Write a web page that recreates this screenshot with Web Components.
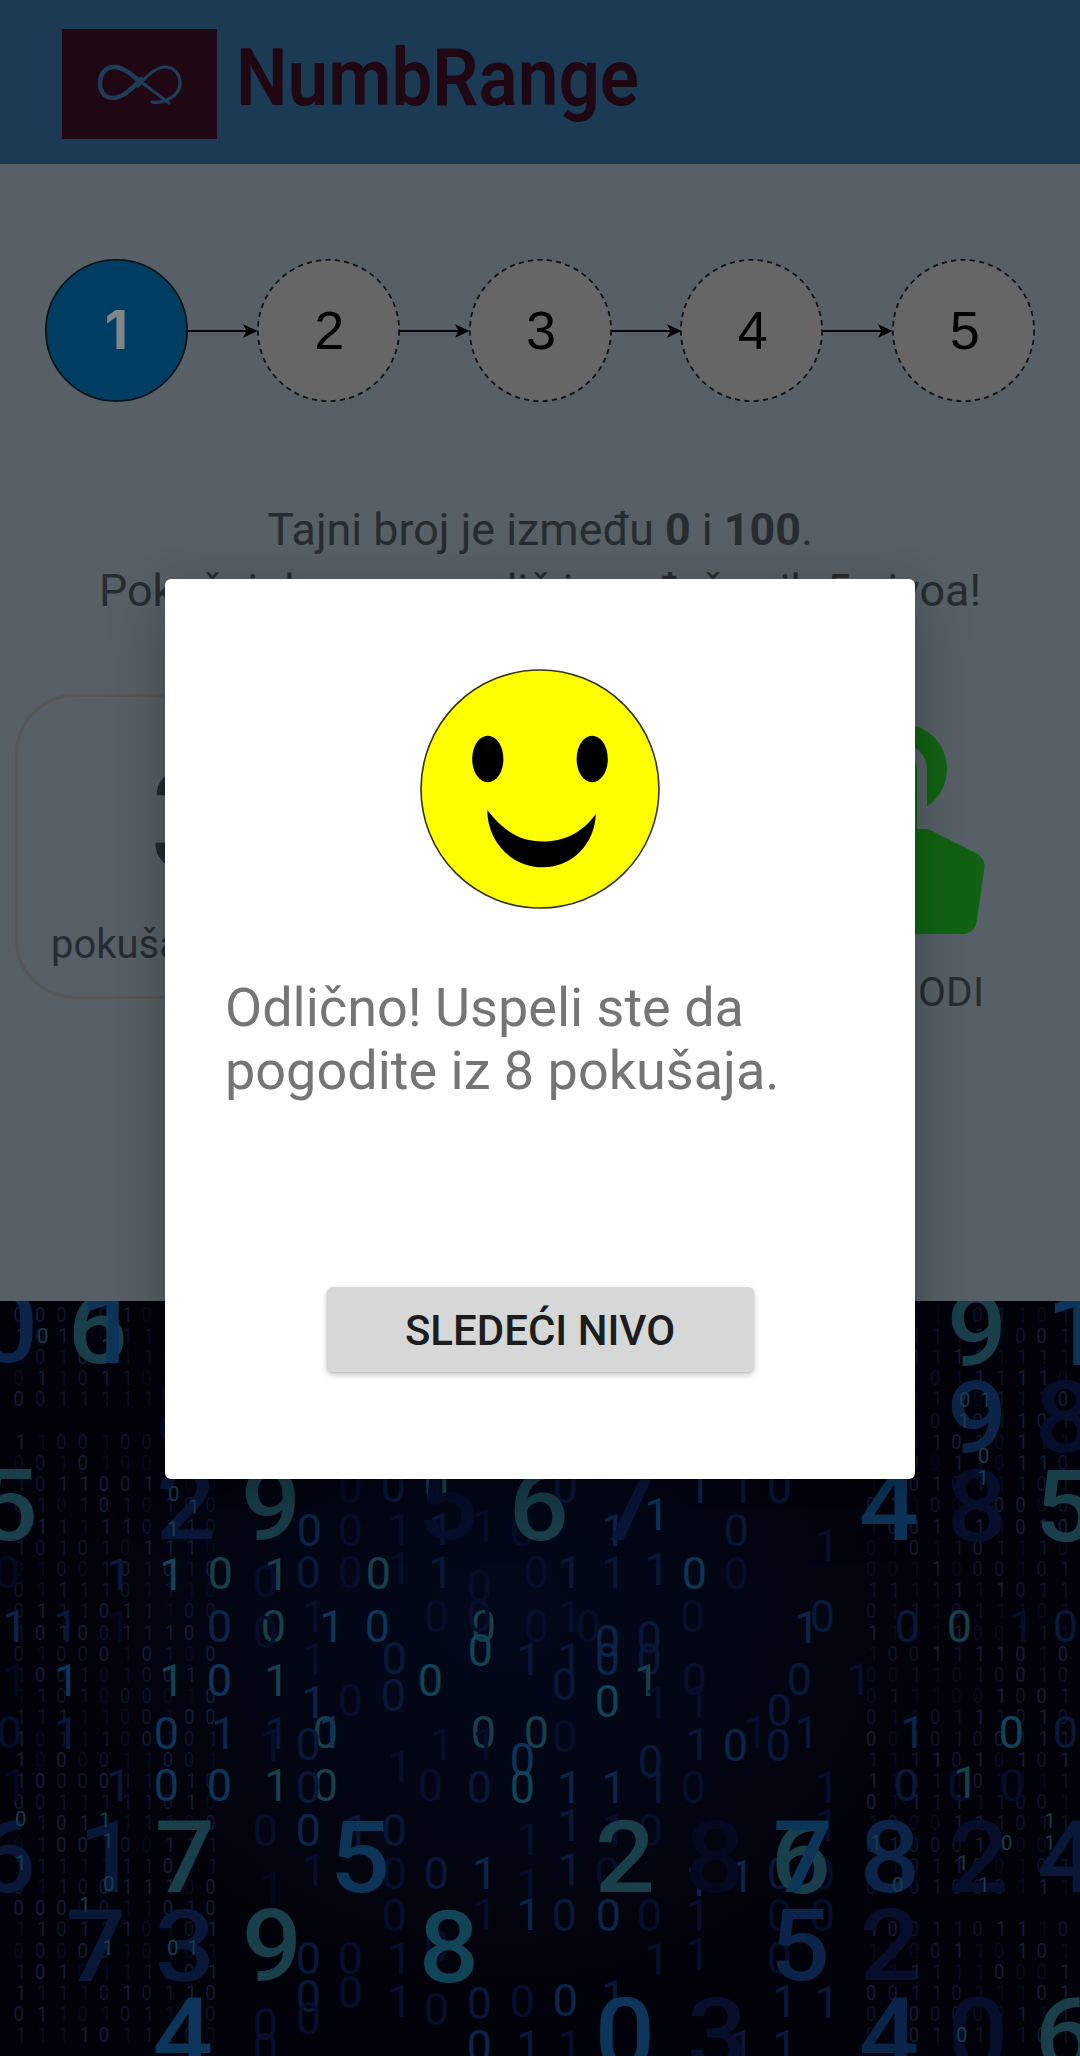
<!DOCTYPE html>
<html lang="sr-Latn">
<head>
<meta charset="utf-8">
<title>NumbRange</title>
<style>
html,body{margin:0;padding:0;background:#02030b}
body{font-family:Roboto,"Liberation Sans",sans-serif}
</style>
</head>
<body>
<numb-app></numb-app>
<script>
const define=(name,html,init)=>customElements.define(name,class extends HTMLElement{
  connectedCallback(){
    if(this.shadowRoot)return;
    const t=document.createElement('template');
    t.innerHTML=typeof html==='function'?html(this):html;
    this.attachShadow({mode:'open'}).append(t.content.cloneNode(true));
    if(init)init(this.shadowRoot,this);
  }
});

define('app-header',`<style>
:host{display:flex;height:164px;box-sizing:border-box;background:#1b3b55;padding:29px 0 0 62px}
.mark{width:155px;height:110px;background:#1f0813;flex:none}
.name{flex:none;margin-left:19px;overflow:visible}
svg{display:block}
</style>
<div class="mark"><svg width="155" height="110" viewBox="0 0 155 110" fill="none" stroke="#1d3d58" stroke-linecap="round">
<path stroke-width="4.5" d="M79 54C69 44 60 38 52 38C43 38 38 46 38 54C38 63 43 69 51 69C61 69 71 59 79 50"/>
<path stroke-width="3.2" d="M76 57C87 44 95 38 103 38C112 38 118 45 118 54C118 64 110 70 98 73C94 74 91 73 90 73M78 52L107 74"/></svg></div>
<svg class="name" width="410" height="110"><text x="0" y="75.5" textLength="403" lengthAdjust="spacingAndGlyphs" font-size="79" font-weight="600" fill="#1f0813" font-family="Roboto,sans-serif">NumbRange</text></svg>`);

define('level-step',el=>{
  const on=el.hasAttribute('active');
  return `<style>
:host{display:block;width:143px;height:143px;flex:none}
.c{display:grid;place-items:center;width:143px;height:143px}
svg{grid-area:1/1}
span{grid-area:1/1;font:${on?'bold 54px/60px Inter':'54px/60px "Liberation Sans"'},sans-serif;color:${on?'#7e868a':'#000'};margin:${on?'-1px 0 0 0':'-2px 0 0 2px'}}
</style><div class="c"><svg width="143" height="143"><circle cx="71.5" cy="71.5" r="70.6" fill="${on?'#003f63':'#666'}" stroke="#0d1418" stroke-width="1.8" ${on?'':'stroke-dasharray="5.2 4.2"'}/></svg><span><slot></slot></span></div>`;
});

define('step-arrow',`<style>:host{display:block;flex:none;width:68.8px;height:16px}svg{display:block;overflow:visible}</style>
<svg width="69" height="16"><path d="M0 8H60" stroke="#000" stroke-width="2"/><path d="M69.5 8L55 1.2L58.5 8L55 14.8Z"/></svg>`);

define('level-track',`<style>:host{display:flex;align-items:center;padding:95px 0 0 45px}</style><slot></slot>`);

define('game-hint',`<style>
:host{display:block;text-align:center;font-size:44.8px;line-height:61px;color:#262c30;padding-top:97px;white-space:nowrap}
</style><slot></slot>`);

define('attempt-card',`<style>
:host{display:block;box-sizing:border-box;width:300px;height:305px;border:3px solid #57575a;border-radius:60px;margin-left:15px;flex:none;white-space:nowrap}
b{display:block;font-size:143px;line-height:150px;margin:50px 0 0 133px;color:#222a2d}
span{display:block;font-size:40px;line-height:46px;margin:25px 0 0 33px;color:#262c33}
</style><b><slot name="count"></slot></b><span><slot></slot></span>`);

define('guess-button',`<style>
:host{display:flex;flex-direction:column;width:240px;margin-right:53px;font-size:40.5px;line-height:46px;color:#262c30}
svg{display:block}
span{margin:35px 0 0 49px;letter-spacing:.3px}
</style><svg width="240" height="240" viewBox="0 0 24 24" fill="#116313"><path d="M9 11.24V7.5C9 6.12 10.12 5 11.5 5S14 6.12 14 7.5v3.74c1.21-.81 2-2.18 2-3.74C16 5.01 13.99 3 11.5 3S7 5.01 7 7.5c0 1.56.79 2.93 2 3.74zm9.84 4.63l-4.54-2.26c-.17-.07-.35-.11-.54-.11H13v-6c0-.83-.67-1.5-1.5-1.5S10 6.67 10 7.5v10.74l-3.43-.72c-.08-.01-.15-.03-.24-.03-.31 0-.59.13-.79.33l-.79.8 4.94 4.94c.27.27.65.44 1.06.44h6.79c.75 0 1.33-.55 1.44-1.28l.75-5.27c.01-.07.02-.14.02-.2 0-.62-.38-1.16-.91-1.38z"/></svg><span><slot></slot></span>`);

define('game-panel',`<style>
:host{display:block;height:1137px;background:#566066;overflow:hidden}
.row{display:flex;justify-content:space-between;margin-top:73px}
</style><slot></slot><div class="row"><slot name="tools"></slot></div>`);

/* Digit rain: entries are "digit x baseline tone"; tones t teal, b blue, c steel, d dark, n faint. */
const BIG=`0 -17 1362 c,6 73 1363 t,1 88 1363 b,5 -17 1540 t,8 160 1447 n,2 161 1539 d,9 246 1540 t,5 423 1539 n,6 514 1540 t,7 603 1540 d,4 864 1540 b,9 952 1366 t,9 952 1453 c,8 952 1541 n,1 1055 1365 b,8 1040 1452 n,5 1040 1541 t,
6 -19 1892 d,1 87 1892 d,7 160 1892 t,5 335 1892 b,2 600 1892 t,8 690 1892 f,6 776 1893 t,7 778 1892 b,8 865 1892 c,2 954 1892 n,4 1042 1892 d,
7 71 1981 d,3 160 1981 d,9 247 1981 t,8 424 1982 e,5 775 1980 c,2 865 1980 n,4 158 2069 b,0 600 2069 b,3 692 2069 n,4 864 2069 c,0 953 2069 n,6 1040 2069 t`;
const MID=`1 163 1590 e,0 210 1589 t,1 268 1590 t,0 368 1589 t,0 255 1597 n,0 298 1588 d,0 340 1588 n,1 391 1584 n,1 432 1588 d,0 469 1602 n,0 526 1588 n,0 -3 1588 f,1 110 1590 d,0 340 1503 n,0 383 1502 d,0 426 1503 e,0 299 1546 c,0 340 1546 n,1 391 1545 n,1 432 1545 d,1 476 1541 n,0 512 1546 n,
1 6 1642 c,1 57 1642 d,0 209 1642 c,0 263 1642 t,1 323 1642 b,0 367 1642 b,0 473 1642 t,1 305 1632 n,0 426 1632 n,0 469 1632 n,0 470 1666 e,0 255 1648 n,1 110 1642 f,0 526 1642 n,0 384 1674 d,1 305 1675 n,1 520 1675 d,1 58 1696 b,1 163 1696 e,0 209 1696 b,1 268 1696 t,0 420 1696 e,1 6 1696 f,
1 305 1718 c,0 340 1716 n,0 383 1711 d,0 -1 1748 n,1 58 1749 d,0 156 1749 b,1 215 1749 c,1 268 1749 d,0 315 1748 t,1 322 1748 b,0 473 1748 t,0 526 1748 t,0 298 1760 d,1 263 1761 n,1 433 1760 n,1 476 1760 n,0 512 1775 b,0 512 1803 e,1 391 1782 n,
1 6 1801 f,1 110 1801 d,0 156 1801 b,0 209 1801 b,1 268 1801 t,0 315 1801 t,0 298 1803 d,0 420 1801 n,0 469 1803 d,0 255 1846 n,0 298 1846 c,1 348 1846 d,0 384 1846 d,1 520 1855 n,1 305 1886 n,0 384 1889 n,0 426 1889 d,1 476 1889 c,1 520 1900 n,0 384 1931 n,1 263 1904 f,1 476 1930 n,1 520 1930 c,0 298 1974 d,0 340 1974 n,1 391 1974 n,0 426 1962 n,0 298 2012 d,0 340 2008 n,1 391 2017 n,0 426 2025 n,0 469 2019 d,0 512 2017 n,0 255 2040 n,0 298 2034 n,0 255 2065 n,0 469 2062 c,1 520 2062 d,
0 555 1503 d,1 648 1530 b,1 605 1546 c,1 690 1503 c,1 733 1503 d,0 769 1503 d,0 726 1546 d,0 726 1589 n,0 684 1589 b,1 561 1588 d,1 605 1588 d,1 648 1585 d,1 818 1561 n,0 682 1632 n,0 812 1632 d,1 798 1643 c,0 578 1642 n,1 561 1632 n,0 597 1657 c,0 597 1675 c,0 639 1653 d,0 639 1675 d,1 561 1675 d,0 554 1700 d,0 684 1695 n,0 789 1695 d,1 850 1695 n,1 638 1696 t,0 597 1717 e,0 554 1752 n,0 640 1777 d,0 725 1761 c,0 769 1726 d,0 768 1761 d,1 798 1748 d,1 747 1748 n,1 689 1760 d,1 689 1717 n,1 648 1718 n,1 904 1748 c,0 1001 1748 e,0 1055 1748 d,0 949 1642 t,0 897 1642 d,1 1013 1642 n,0 1055 1642 d,
1 561 1803 c,1 605 1803 c,1 648 1803 d,0 683 1803 n,1 818 1803 n,0 896 1801 d,0 950 1801 n,1 957 1798 t,0 1002 1801 n,1 561 1841 d,1 605 1846 n,0 640 1846 n,1 818 1841 n,1 561 1885 d,0 597 1889 n,1 689 1896 c,1 733 1892 c,0 769 1889 d,0 812 1889 n,0 554 1931 d,0 598 1931 c,0 639 1931 n,1 689 1931 n,0 769 1931 n,0 812 1931 n,1 648 1975 n,1 689 1970 n,0 769 1974 n,0 555 2016 c,1 605 2012 d,1 776 2017 d,1 818 2018 d,1 561 2062 n,1 733 2062 d,1 776 2062 d`;
const TONE={t:'#183f4a',b:'#0d3559',e:'#114457',c:'#0c2449',d:'#091739',n:'#060e2b',f:'#040921'};
define('digit-rain',`<style>:host{display:block;height:755px;overflow:hidden;background:radial-gradient(ellipse 430px 380px at 500px 310px,#02081b,#030613 55%,#02020a)}svg{display:block}</style><svg width="1080" height="755" viewBox="0 1301 1080 755" font-family="Roboto,sans-serif" aria-hidden="true"></svg>`,root=>{
  const svg=root.querySelector('svg');
  const put=(ch,x,y,size,fill,w,sx=1)=>{
    const t=document.createElementNS('http://www.w3.org/2000/svg','text');
    t.textContent=ch;
    t.setAttribute('font-size',size);t.setAttribute('font-weight',w);t.setAttribute('fill',fill);
    t.setAttribute('transform',`translate(${x-(ch==='1'?.085:.05)*size*sx} ${y}) scale(${sx} 1)`);
    svg.append(t);
  };
  let s=41;const rnd=()=>(s=(s*1103515245+12345)&0x7fffffff)/0x7fffffff;
  for(const x0 of [14.5,867])for(let r=0;r<35;r++){
    const y=1321.5+r*21.2;
    if(r===5&&x0<100)continue;
    if(r===28&&x0>100)continue;
    for(let c=0;c<10;c++){
      const one=rnd()>.42,k=rnd();
      put(one?'1':'0',x0+c*21.3+(one?3:0),y,20.5,k<.35?'#070b1f':k<.75?'#0b142b':'#121d35',400,.9);
    }
  }
  const draw=(data,size,w,sx)=>data.split(',').forEach(e=>{
    const [ch,x,y,tone]=e.trim().split(' ');
    put(ch,+x,+y,size,TONE[tone],w,sx);
  });
  draw(MID,45,400,1);
  draw(BIG,101,500,1.05);
  [[38,1343],[103,1331],[103,1353],[169,1501],[190,1514],[169,1536],[16,1826],[101,1827],[104,1848],[104,1891],[17,1870],[81,1912],[168,1955],[189,1955],[104,1955],[960,1407],[982,1407],[960,1428],[979,1463],[979,1485],[872,1850],[893,1892],[959,1870],[980,1892],[1002,1850],[1046,1828],[1046,1850],[957,2042]].forEach(([x,y],i)=>put(i%3?'1':'0',x,y,20.5,'#183c49',400));
});

define('smiley-face',`<style>:host{display:block;width:240px;height:240px}svg{display:block}</style>
<svg width="240" height="240"><circle cx="120" cy="120" r="119" fill="#ff0" stroke="#33331a" stroke-width="1.6"/><ellipse cx="67.8" cy="90" rx="15.6" ry="23.2"/><ellipse cx="172.2" cy="90" rx="15.6" ry="23.2"/><path d="M67.3 141C84 163 101 172.5 123 172.5C145 172.5 163 163 175.8 145C175 174 153 198.3 123 198.3C90 198.3 67 171 67.3 141Z"/></svg>`);

define('flat-button',`<style>
:host{display:flex;justify-content:center;align-items:center;box-sizing:border-box;width:427px;height:85px;background:#d6d8d7;border-radius:6px;box-shadow:0 3px 6px rgba(0,0,0,.22),0 1px 2px rgba(0,0,0,.1);font-weight:500;font-size:42px;line-height:50px;color:#1d1d1d;padding-top:2px}
</style><slot></slot>`);

define('result-dialog',`<style>
:host{position:absolute;left:165px;top:579px;width:750px;height:900px;box-sizing:border-box;display:flex;flex-direction:column;align-items:center;background:#fff;border-radius:6px;padding-top:90px;box-shadow:0 24px 60px rgba(0,0,0,.22),0 0 34px rgba(0,0,0,.08)}
.msg{align-self:stretch;padding:0 60px;margin-top:67px;height:311px;font-size:54px;line-height:63px;color:#757575}
</style><smiley-face></smiley-face><div class="msg"><slot></slot></div><slot name="action"></slot>`);

define('numb-app',`<style>:host{display:block;position:relative;width:1080px;height:2056px;overflow:hidden}</style>
<app-header></app-header>
<game-panel>
<level-track><level-step active>1</level-step><step-arrow></step-arrow><level-step>2</level-step><step-arrow></step-arrow><level-step>3</level-step><step-arrow></step-arrow><level-step>4</level-step><step-arrow></step-arrow><level-step>5</level-step></level-track>
<game-hint>Tajni broj je između <b>0</b> i <b>100</b>.<br>Pokušaj da ga pogodiš i prođeš svih 5 nivoa!</game-hint>
<attempt-card slot="tools"><span slot="count">3</span>pokušaja</attempt-card>
<guess-button slot="tools">POGODI</guess-button>
</game-panel>
<digit-rain></digit-rain>
<result-dialog>Odlično! Uspeli ste da<br>pogodite iz 8 pokušaja.<flat-button slot="action">SLEDEĆI NIVO</flat-button></result-dialog>`);
</script>
</body>
</html>
